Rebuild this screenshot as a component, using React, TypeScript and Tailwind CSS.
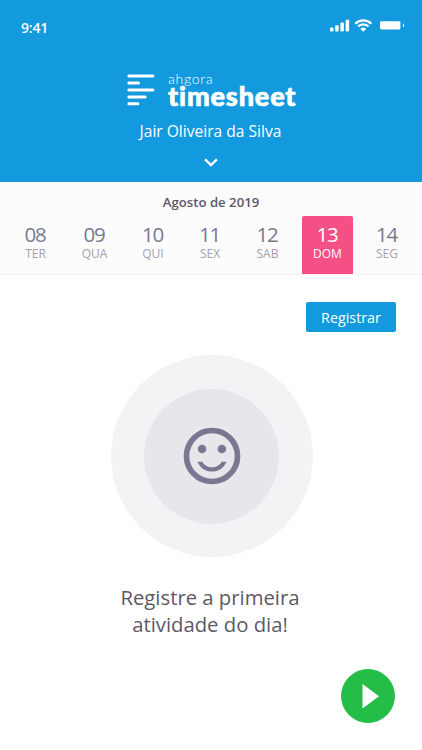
import clsx from "clsx";

interface Day {
  num: string;
  label: string;
  spacing: string;
  active?: boolean;
}

const days: Day[] = [
  { num: "08", label: "TER", spacing: "ml-[10px]" },
  { num: "09", label: "QUA", spacing: "ml-[8px]" },
  { num: "10", label: "QUI", spacing: "ml-[7.5px]" },
  { num: "11", label: "SEX", spacing: "ml-[6px]" },
  { num: "12", label: "SAB", spacing: "ml-[6.5px]" },
  { num: "13", label: "DOM", spacing: "ml-[9px]", active: true },
  { num: "14", label: "SEG", spacing: "ml-[8.5px]" },
];

function StatusBar() {
  return (
    <div className="flex h-14 items-center justify-between pl-[21px] pr-[17px] text-white">
      <span className="text-[14px] font-semibold leading-5 tracking-[-0.2px]">9:41</span>
      <svg width="76" height="14" viewBox="0 0 76 14" fill="currentColor" className="-mt-1">
        <rect x="1" y="8.5" width="3.5" height="4" rx="1" />
        <rect x="6.2" y="6.2" width="3.5" height="6.3" rx="1" />
        <rect x="11.4" y="3.6" width="3.5" height="8.9" rx="1" />
        <rect x="16.6" y="0.8" width="3.5" height="11.7" rx="1" />
        <g fill="none" stroke="currentColor" strokeWidth="2.2">
          <path d="M26.3 4.7a11.2 11.2 0 0 1 16 0" />
          <path d="M29.1 7.6a7.3 7.3 0 0 1 10.4 0" />
        </g>
        <path d="M31.4 9.9a4.1 4.1 0 0 1 5.8 0l-2.9 2.9z" />
        <rect x="51" y="2.2" width="20.4" height="8.3" rx="1.4" />
        <path d="M74 4.4c1.7.6 1.7 3.3 0 3.9z" />
      </svg>
    </div>
  );
}

function Logo() {
  return (
    <div className="flex pl-[127px] text-white">
      <svg width="28" height="32" viewBox="0 0 28 32" fill="none" stroke="currentColor" strokeWidth="3.1" strokeLinecap="round" className="mt-[2px]">
        <path d="M1.9 2h24M1.9 9h9.6M1.9 16h24M1.9 23h16.2M1.9 29.8h9" />
      </svg>
      <div className="ml-[13px] font-['Lato',sans-serif]">
        <div className="h-3 text-[14px] font-light leading-[14px] tracking-[0.7px]">ahgora</div>
        <div className="h-[25px] text-[27px] font-black leading-[23px] tracking-[0.85px] [-webkit-text-stroke:0.7px_white]">timesheet</div>
      </div>
    </div>
  );
}

function Header() {
  return (
    <header className="h-[182px] bg-[#1299de]">
      <StatusBar />
      <div className="h-4" />
      <Logo />
      <p className="mt-[10px] pr-[1px] text-center text-[15.6px] leading-6 text-white">Jair Oliveira da Silva</p>
      <svg width="14" height="9" viewBox="0 0 14 9" fill="none" stroke="white" strokeWidth="2.4" className="mx-auto mt-[15px]">
        <path d="M1.1 1.3 7 7.1l5.9-5.8" />
      </svg>
    </header>
  );
}

function WeekPicker() {
  return (
    <section className="h-[93px] border-b border-[#f0f0f3] bg-[#fcfcfc]">
      <h2 className="pt-[10px] text-center text-[13.2px] font-semibold leading-5 text-[#5b5968]">Agosto de 2019</h2>
      <div className="mt-1 flex">
        {days.map((day) => (
          <div
            key={day.num}
            className={clsx(
              "flex h-[58px] w-[51px] shrink-0 flex-col items-center rounded-t-[2px] pt-[6px]",
              day.spacing,
              day.active ? "bg-[#f45085] text-white" : "text-[#7a7890]"
            )}
          >
            <span className="h-6 pr-px text-[20.5px] leading-[25px] tracking-[-1.1px]">{day.num}</span>
            <span className={clsx("text-[12px] leading-4", !day.active && "text-[#a3a1b1]")}>{day.label}</span>
          </div>
        ))}
      </div>
    </section>
  );
}

function EmptyState() {
  return (
    <div className="flex flex-col items-center">
      <div className="ml-px flex size-[202px] items-center justify-center rounded-full bg-[#f3f3f6]">
        <div className="flex size-[135px] items-center justify-center rounded-full bg-[#e6e6eb]">
          <svg width="68" height="68" viewBox="0 0 24 24" fill="#7a7891">
            <circle cx="12" cy="12" r="9" fill="none" stroke="#7a7891" strokeWidth="2" />
            <circle cx="8.5" cy="9.5" r="1.5" />
            <circle cx="15.5" cy="9.5" r="1.5" />
            <path d="M12 16c-1.48 0-2.75-.81-3.45-2H6.88c.8 2.05 2.79 3.5 5.12 3.5s4.32-1.45 5.12-3.5h-1.67c-.7 1.19-1.97 2-3.45 2z" />
          </svg>
        </div>
      </div>
      <p className="mr-[2px] mt-[27px] text-center text-[20.3px] leading-[27px] text-[#5b5968]">
        Registre a primeira
        <br />
        atividade do dia!
      </p>
    </div>
  );
}

export default function App() {
  return (
    <div className="flex h-[750px] w-[422px] flex-col overflow-hidden bg-white font-['Open_Sans',sans-serif]">
      <Header />
      <WeekPicker />
      <main className="flex flex-1 flex-col">
        <button className="mb-[23px] ml-auto mr-[26px] mt-[27px] h-[30px] w-[90px] rounded-[2px] bg-[#1299de] pt-px text-[14.3px] leading-5 text-white">
          Registrar
        </button>
        <EmptyState />
        <button className="mb-[27px] ml-auto mr-[27px] mt-auto flex size-[54px] items-center justify-center rounded-full bg-[#23bd47]">
          <svg width="54" height="54" viewBox="0 0 54 54" fill="white">
            <path d="M21.5 15v24.5L38 27.2z" />
          </svg>
        </button>
      </main>
    </div>
  );
}
